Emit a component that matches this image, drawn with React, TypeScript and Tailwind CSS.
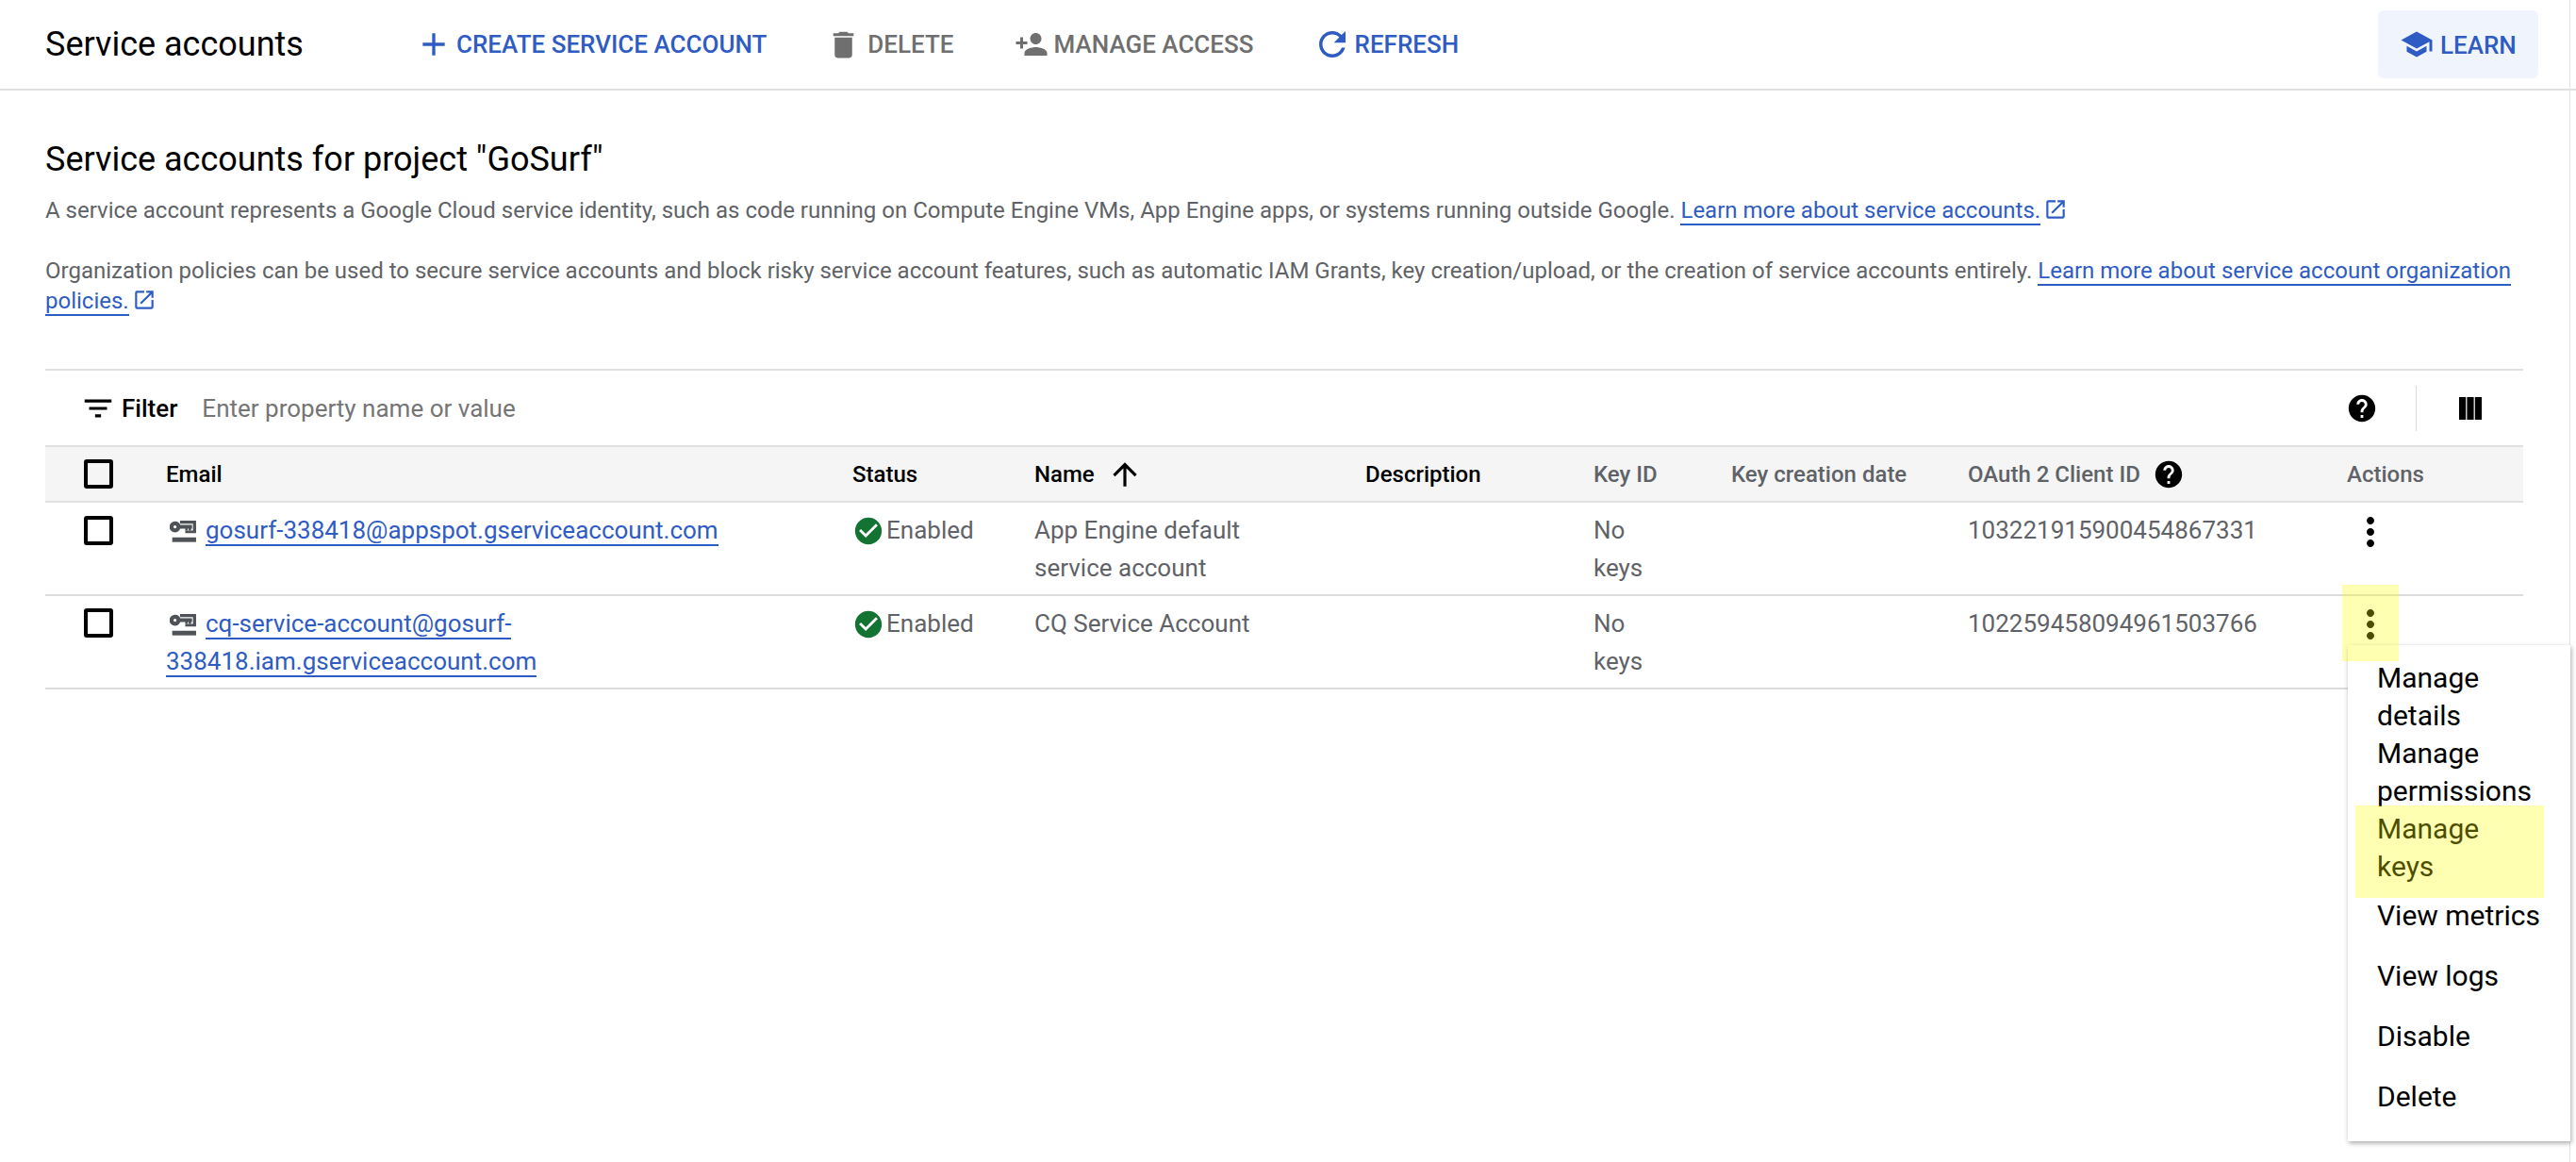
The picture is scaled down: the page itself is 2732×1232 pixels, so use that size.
const P: Record<string, string> = {
  plus: "M19 13h-6v6h-2v-6H5v-2h6V5h2v6h6v2z",
  del: "M6 19c0 1.1.9 2 2 2h8c1.1 0 2-.9 2-2V7H6v12zM19 4h-3.5l-1-1h-5l-1 1H5v2h14V4z",
  add: "M15 12c2.21 0 4-1.79 4-4s-1.79-4-4-4-4 1.79-4 4 1.79 4 4 4zm-9-2V7H4v3H1v2h3v3h2v-3h3v-2H6zm9 4c-2.67 0-8 1.34-8 4v2h16v-2c0-2.66-5.33-4-8-4z",
  refresh: "M17.65 6.35C16.2 4.9 14.21 4 12 4c-4.42 0-7.99 3.58-7.99 8s3.57 8 7.99 8c3.73 0 6.84-2.55 7.73-6h-2.08c-.82 2.33-3.04 4-5.65 4-3.31 0-6-2.69-6-6s2.69-6 6-6c1.66 0 3.14.69 4.22 1.78L13 11h7V4l-2.35 2.35z",
  learn: "M5 13.18v4L12 21l7-3.82v-4L12 17l-7-3.82zM12 3L1 9l11 6 9-4.91V17h2V9L12 3z",
  filter: "M10 18h4v-2h-4v2zM3 6v2h18V6H3zm3 7h12v-2H6v2z",
  help: "M12 2C6.48 2 2 6.48 2 12s4.48 10 10 10 10-4.48 10-10S17.52 2 12 2zm1 17h-2v-2h2v2zm2.07-7.75l-.9.92C13.45 12.9 13 13.5 13 15h-2v-.5c0-1.1.45-2.1 1.17-2.83l1.24-1.26c.37-.36.59-.86.59-1.41 0-1.1-.9-2-2-2s-2 .9-2 2H8c0-2.21 1.79-4 4-4s4 1.79 4 4c0 .88-.36 1.68-.93 2.25z",
  cols: "M0 0h7.2v24H0zM8.4 0h7.2v24H8.4zM16.8 0H24v24h-7.2z",
  check: "M12 2C6.48 2 2 6.48 2 12s4.48 10 10 10 10-4.48 10-10S17.52 2 12 2zm-2 15l-5-5 1.41-1.41L10 14.17l7.59-7.59L19 8l-9 9z",
  more: "M12 8c1.1 0 2-.9 2-2s-.9-2-2-2-2 .9-2 2 .9 2 2 2zm0 2c-1.1 0-2 .9-2 2s.9 2 2 2 2-.9 2-2-.9-2-2-2zm0 6c-1.1 0-2 .9-2 2s.9 2 2 2 2-.9 2-2-.9-2-2-2z",
  up: "M4 12l1.41 1.41L11 7.83V20h2V7.83l5.58 5.59L20 12l-8-8-8 8z",
  open: "M19 19H5V5h7V3H5a2 2 0 0 0-2 2v14a2 2 0 0 0 2 2h14c1.1 0 2-.9 2-2v-7h-2v7zM14 3v2h3.59l-9.83 9.83 1.41 1.41L19 6.41V10h2V3h-7z",
};

function Icon({ name, className }: { name: string; className: string }) {
  return (
    <svg viewBox="0 0 24 24" fill="currentColor" className={className} aria-hidden="true">
      <path d={P[name]} fillRule="evenodd" />
    </svg>
  );
}

function KeyIcon() {
  return (
    <svg viewBox="0 0 85 70" fill="#4f5256" className="ml-1 mr-[10px] inline-block h-[23px] w-[28px] align-[-4px]" aria-hidden="true">
      <path d="M33 0h52v40H50v-8h25V10H33z" />
      <path
        fillRule="evenodd"
        d="M17 2a18 18 0 0 1 17 12h38v12h-3v6h-8v-6h-3v6h-8v-6H34A18 18 0 1 1 17 2zm0 13a5 5 0 1 0 0 10 5 5 0 0 0 0-10z"
      />
      <path d="M8 54h77v15H8z" />
    </svg>
  );
}

function ToolButton({ icon, label, blue, iconClass, gap }: { icon: string; label: string; blue?: boolean; iconClass: string; gap: string }) {
  return (
    <div className={`flex items-center ${gap} text-[26px] font-medium leading-8 ${blue ? "text-[#2f5cc2]" : "text-[#6f6f6f]"}`}>
      <Icon name={icon} className={iconClass} />
      <span>{label}</span>
    </div>
  );
}

const GRID = "grid grid-cols-[128px_728px_193px_351px_242px_146px_251px_402px_187px]";

function Check({ top }: { top?: string }) {
  return <div className={`ml-[41px] h-[31px] w-[31px] rounded-[3px] border-[4px] border-black ${top ?? ""}`} />;
}

function ExternalLink() {
  return <Icon name="open" className="ml-[3px] inline-block h-[26px] w-[26px] align-[-4px] text-[#2f5cc2]" />;
}

function Link({ children }: { children: React.ReactNode }) {
  return <span className="border-b-2 border-[#2f5cc2] text-[#2f5cc2]">{children}</span>;
}

function Status() {
  return (
    <div className="flex items-start">
      <Icon name="check" className="mt-[4px] h-[34px] w-[34px] shrink-0 text-[#137333]" />
      <span className="ml-[2px]">Enabled</span>
    </div>
  );
}

function HeadCell({ children, dark }: { children: React.ReactNode; dark?: boolean }) {
  return (
    <div className={`flex items-center font-medium ${dark ? "text-black" : "text-[#5f6368]"}`}>{children}</div>
  );
}

export default function App() {
  return (
    <div className="relative h-[1232px] w-[2732px] overflow-hidden bg-white font-['Roboto',sans-serif]">
      <div className="absolute bottom-0 right-[6px] top-0 w-px bg-[#e2e2e2]" />
      <header className="flex h-[96px] items-center border-b-2 border-[#e0e0e0] pl-[48px] pr-[40px]">
        <h1 className="w-[392px] text-[36px] leading-none text-black">Service accounts</h1>
        <ToolButton icon="plus" label="CREATE SERVICE ACCOUNT" blue iconClass="h-10 w-10" gap="gap-1" />
        <div className="ml-[63px]"><ToolButton icon="del" label="DELETE" iconClass="h-[37px] w-[37px]" gap="gap-[7px]" /></div>
        <div className="ml-[64px]"><ToolButton icon="add" label="MANAGE ACCESS" iconClass="h-9 w-9" gap="gap-[6px]" /></div>
        <div className="ml-[62px]"><ToolButton icon="refresh" label="REFRESH" blue iconClass="h-[42px] w-[42px]" gap="gap-[3px]" /></div>
        <div className="ml-auto flex h-[72px] w-[170px] items-center gap-[7px] rounded-[6px] bg-[#f0f4fd] pl-[23px] text-[26px] font-medium text-[#2f5cc2]">
          <Icon name="learn" className="h-9 w-9" />
          <span className="pt-[2px]">LEARN</span>
        </div>
      </header>

      <main className="px-[48px]">
        <h2 className="mt-[47px] text-[36px] leading-[52px] text-black">Service accounts for project "GoSurf"</h2>
        <p className="mt-[12px] text-[24px] leading-8 text-[#5f6368]">
          A service account represents a Google Cloud service identity, such as code running on Compute Engine VMs, App Engine apps, or systems running outside Google. <Link>Learn more about service accounts.</Link>
          <ExternalLink />
        </p>
        <p className="mt-[32px] text-[24px] leading-8 text-[#5f6368]">
          Organization policies can be used to secure service accounts and block risky service account features, such as automatic IAM Grants, key creation/upload, or the creation of service accounts entirely. <Link>Learn more about service account organization policies.</Link>
          <ExternalLink />
        </p>

        <section className="mt-[56px] w-[2628px] text-[26px] leading-10">
          <div className="flex h-[81px] items-center border-t-2 border-[#e0e0e0] pl-[37px] pr-[44px]">
            <Icon name="filter" className="h-[38px] w-[38px] text-black" />
            <span className="ml-[6px] font-medium text-black">Filter</span>
            <span className="ml-[26px] text-[#757575]">Enter property name or value</span>
            <Icon name="help" className="ml-auto h-[34px] w-[34px] text-black" />
            <div className="ml-[40px] mr-[45px] h-[48px] w-px bg-[#dadce0]" />
            <Icon name="cols" className="h-6 w-6 text-black" />
          </div>

          <div className={`${GRID} h-[61px] items-center border-y-2 border-[#e0e0e0] bg-[#f5f5f5] text-[24px]`}>
            <Check />
            <HeadCell dark>Email</HeadCell>
            <HeadCell dark>Status</HeadCell>
            <HeadCell dark>
              Name
              <Icon name="up" className="ml-[13px] h-[38px] w-[38px] text-black" />
            </HeadCell>
            <HeadCell dark>Description</HeadCell>
            <HeadCell>Key ID</HeadCell>
            <HeadCell>Key creation date</HeadCell>
            <HeadCell>
              OAuth 2 Client ID
              <Icon name="help" className="ml-[13px] h-[34px] w-[34px] text-black" />
            </HeadCell>
            <HeadCell>Actions</HeadCell>
          </div>

          <div className={`${GRID} h-[99px] border-b-2 border-[#dcdcdc] pt-[9px] text-[#5f6368]`}>
            <Check top="mt-[5px]" />
            <div>
              <KeyIcon />
              <Link>gosurf-338418@appspot.gserviceaccount.com</Link>
            </div>
            <Status />
            <div className="pr-[100px]">App Engine default service account</div>
            <div />
            <div className="pr-[60px]">No keys</div>
            <div />
            <div>103221915900454867331</div>
            <Icon name="more" className="ml-px mt-[-2px] h-12 w-12 text-black" />
          </div>

          <div className={`${GRID} h-[99px] border-b-2 border-[#dcdcdc] pt-[9px] text-[#5f6368]`}>
            <Check top="mt-[4px]" />
            <div>
              <KeyIcon />
              <Link>cq-service-account@gosurf-</Link>
              <br />
              <Link>338418.iam.gserviceaccount.com</Link>
            </div>
            <Status />
            <div>CQ Service Account</div>
            <div />
            <div className="pr-[60px]">No keys</div>
            <div />
            <div>102259458094961503766</div>
            <Icon name="more" className="ml-px mt-[-3px] h-12 w-12 text-black" />
          </div>
        </section>
      </main>

      <div className="absolute left-[2490px] top-[684px] w-[236px] bg-white py-[15px] text-[30px] leading-10 text-black shadow-[1px_2px_5px_rgba(0,0,0,0.35)]">
        {["Manage details", "Manage permissions", "Manage keys"].map((t) => (
          <div key={t} className="pl-[31px] pr-[36px]">{t}</div>
        ))}
        {["View metrics", "View logs", "Disable", "Delete"].map((t) => (
          <div key={t} className="flex h-[64px] items-center whitespace-nowrap pl-[31px]">{t}</div>
        ))}
      </div>
      <div className="absolute left-[2484px] top-[620px] h-[81px] w-[60px] bg-[#ffff00]/30" />
      <div className="absolute left-[2498px] top-[854px] h-[98px] w-[200px] bg-[#ffff00]/30" />
    </div>
  );
}
